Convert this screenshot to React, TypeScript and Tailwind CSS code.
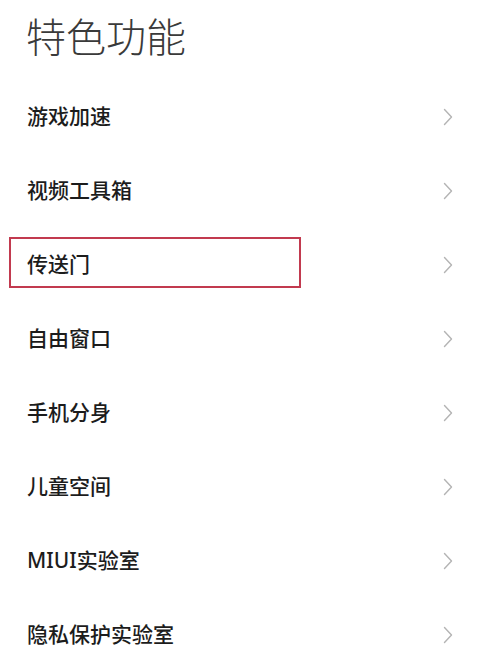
import React from 'react';

const items = ['游戏加速', '视频工具箱', '传送门', '自由窗口', '手机分身', '儿童空间', 'MIUI实验室', '隐私保护实验室'];

const Chevron: React.FC = () => (
  <svg width="10" height="18" viewBox="0 0 10 18" fill="none">
    <polyline points="1.5,1.5 8.5,9 1.5,16.5" stroke="#b4b4b4" strokeWidth="1.4" strokeLinecap="round" strokeLinejoin="round" />
  </svg>
);

const App: React.FC = () => {
  return (
    <div
      className="w-[485px] h-[658px] bg-white overflow-hidden"
      style={{ fontFamily: '"Noto Sans", "Noto Sans CJK SC", sans-serif' }}
    >
      {/* 标题 */}
      <div className="h-[80px] pl-[26px] pt-[15px]">
        <div className="text-[40px] leading-[44px] font-light text-[#3a3a3a]">特色功能</div>
      </div>

      {items.map((label) => (
        <div key={label} className="relative h-[74px] pl-[27px] pr-[32px] flex items-center justify-between">
          <span className="text-[21px] font-medium text-[#1c1c1c]">{label}</span>
          <Chevron />
          {label === '传送门' && (
            <div className="absolute left-[9px] top-[9px] w-[292px] h-[51px] border-2 border-[#c23a4f]" />
          )}
        </div>
      ))}
    </div>
  );
};

export default App;
